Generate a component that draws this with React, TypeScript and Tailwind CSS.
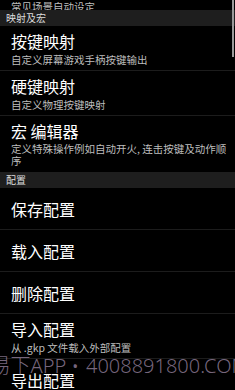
import React from 'react';

type Item = { title: string; desc?: string };

const font = { fontFamily: '"Noto Sans CJK SC", "Noto Sans", sans-serif' };

function Header({ label }: { label: string }) {
    return (
        <div className="h-4 bg-[#1e1e1e] px-1.5 flex items-center text-[10px] leading-4 text-[#dcdcdc]">
            {label}
        </div>
    );
}

function Row({ item, last }: { item: Item; last?: boolean }) {
    if (!item.desc) {
        return (
            <div className={`h-[42px] pl-[11px] flex items-center text-white text-base ${last ? '' : 'border-b border-[#1c1c1c]'}`}>
                {item.title}
            </div>
        );
    }
    return (
        <div className={`pl-[11px] pr-[9px] pt-[5px] pb-1 ${last ? '' : 'border-b border-[#1c1c1c]'}`}>
            <div className="text-white text-base leading-5">{item.title}</div>
            <div className="text-[#bdbdbd] text-[10.5px] leading-[13px] mt-[2px]">{item.desc}</div>
        </div>
    );
}

export default function App() {
    const mapping: Item[] = [
        { title: '按键映射', desc: '自定义屏幕游戏手柄按键输出' },
        { title: '硬键映射', desc: '自定义物理按键映射' },
    ];
    const config: Item[] = [
        { title: '保存配置' },
        { title: '载入配置' },
        { title: '删除配置' },
        { title: '导入配置', desc: '从 .gkp 文件载入外部配置' },
        { title: '导出配置' },
    ];

    return (
        <div className="relative w-[235px] h-[390px] bg-black overflow-hidden" style={font}>
            {/* tail of the previous item, scrolled off the top */}
            <div className="h-[10px] overflow-hidden flex items-end pl-[11px]">
                <div className="text-[#bdbdbd] text-[10.5px] leading-[13px] -mb-[3px]">常见场景自动设定</div>
            </div>

            <Header label="映射及宏" />
            {mapping.map(m => <Row key={m.title} item={m} />)}

            <div className="pl-[11px] pr-1 pt-[5px] pb-[5px]">
                <div className="text-white text-base leading-5">宏 编辑器</div>
                <div className="text-[#bdbdbd] text-[10.5px] leading-3 mt-[2px]">
                    <span className="whitespace-nowrap">定义特殊操作例如自动开火, 连击按键及动作顺</span>
                    <br />
                    序
                </div>
            </div>

            <Header label="配置" />
            {config.map((c, i) => <Row key={c.title} item={c} last={i === config.length - 1} />)}

            {/* scrollbar */}
            <div className="absolute right-px top-0 w-[2px] h-[57px] bg-[#9a9a9a]" />

            {/* watermark */}
            <div
                className="absolute top-[354px] right-[156px] whitespace-nowrap text-[20px] leading-6 font-light text-[#8c7a94]/85"
                style={{ fontFamily: '"Noto Sans", "Noto Sans CJK SC", sans-serif' }}
            >
                易下APP •
            </div>
            <div
                className="absolute top-[354px] left-[86px] whitespace-nowrap text-[20px] leading-6 font-light text-[#8c7a94]/85"
                style={{ fontFamily: '"Noto Sans", sans-serif' }}
            >
                4008891800.COM
            </div>
        </div>
    );
}
